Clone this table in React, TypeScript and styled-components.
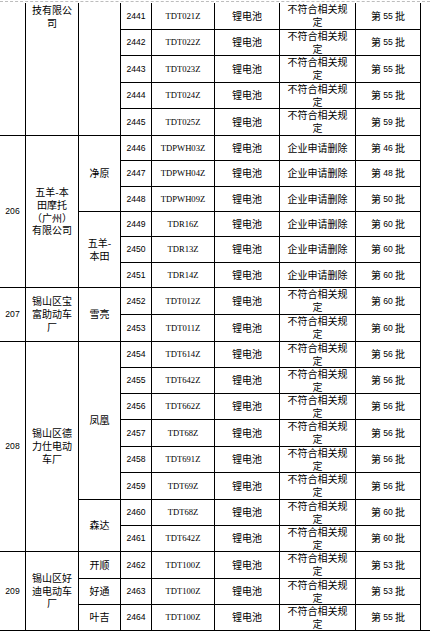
import React from 'react';
import styled, {createGlobalStyle} from 'styled-components';

const GlobalStyle = createGlobalStyle`
    html, body {
        margin: 0;
        padding: 0;
        background: #fff;
    }
    body {
        font-family: "Noto Sans CJK SC", sans-serif;
        color: #000;
    }
`;

// row heights measured line to line, first one includes the top edge
const ROWS = [27, 26, 27, 26, 27, 25, 26, 25, 25, 26, 25, 27, 27, 26, 26, 26, 27, 26, 27, 26, 26, 27, 26, 26];

const Page = styled.div`
    width: 430px;
    height: 640px;
    overflow: hidden;
    padding-top: 1px;
    box-sizing: border-box;
`;

const PageBreak = styled.div`
    border-top: 1px dashed #bdbdbd;
    height: 1px;
`;

const Sheet = styled.div`
    display: flex;
`;

const Grid = styled.div`
    display: grid;
    grid-template-columns: 26px 53px 42px 31px 63px 65px 76px 65px;
    grid-template-rows: ${ROWS.map(r => r + 'px').join(' ')};
`;

const Tail = styled.div`
    flex: 1;
    border-bottom: 1px solid #000;
`;

type Kind = 'cjk' | 'num' | 'model';

const fonts: Record<Kind, string> = {
    cjk: `font-family: "Noto Sans CJK SC", sans-serif; font-size: 10px;`,
    num: `font-family: "Liberation Sans", "Noto Sans CJK SC", sans-serif; font-size: 8.6px;`,
    model: `font-family: "Liberation Serif", "Noto Sans CJK SC", serif; font-size: 8.6px;`,
};

const Cell = styled.div<{ $col: number; $row: number; $span?: number; $kind?: Kind; $top?: boolean }>`
    grid-column: ${p => p.$col};
    grid-row: ${p => p.$row} / span ${p => p.$span || 1};
    box-sizing: border-box;
    border-right: 1px solid #000;
    border-bottom: 1px solid #000;
    display: flex;
    align-items: ${p => (p.$top ? 'flex-start' : 'center')};
    justify-content: center;
    padding-top: ${p => (p.$top ? '1px' : '0')};
    text-align: center;
    white-space: pre-line;
    line-height: 12.7px;
    ${p => fonts[p.$kind || 'cjk']}
`;

const Digits = styled.span`
    font-family: "Liberation Sans", sans-serif;
    font-size: 8.6px;
`;

type Group = { text: string; span: number; top?: boolean; kind?: Kind };

const numbers: Group[] = [
    {text: '', span: 5},
    {text: '206', span: 6, kind: 'num'},
    {text: '207', span: 2, kind: 'num'},
    {text: '208', span: 8, kind: 'num'},
    {text: '209', span: 3, kind: 'num'},
];

const companies: Group[] = [
    {text: '技有限公\n司', span: 5, top: true},
    {text: '五羊-本\n田摩托\n（广州）\n有限公司', span: 6},
    {text: '锡山区宝\n富助动车\n厂', span: 2},
    {text: '锡山区德\n力仕电动\n车厂', span: 8},
    {text: '锡山区好\n迪电动车\n厂', span: 3},
];

const brands: Group[] = [
    {text: '', span: 5},
    {text: '净原', span: 3},
    {text: '五羊-\n本田', span: 3},
    {text: '雪亮', span: 2},
    {text: '凤凰', span: 6},
    {text: '森达', span: 2},
    {text: '开顺', span: 1},
    {text: '好通', span: 1},
    {text: '叶吉', span: 1},
];

const BAD = '不符合相关规\n定';
const DEL = '企业申请删除';

const products: [string, string, number][] = [
    ['TDT021Z', BAD, 55],
    ['TDT022Z', BAD, 55],
    ['TDT023Z', BAD, 55],
    ['TDT024Z', BAD, 55],
    ['TDT025Z', BAD, 59],
    ['TDPWH03Z', DEL, 46],
    ['TDPWH04Z', DEL, 48],
    ['TDPWH09Z', DEL, 50],
    ['TDR16Z', DEL, 60],
    ['TDR13Z', DEL, 60],
    ['TDR14Z', DEL, 60],
    ['TDT012Z', BAD, 60],
    ['TDT011Z', BAD, 60],
    ['TDT614Z', BAD, 56],
    ['TDT642Z', BAD, 56],
    ['TDT662Z', BAD, 56],
    ['TDT68Z', BAD, 56],
    ['TDT691Z', BAD, 56],
    ['TDT69Z', BAD, 56],
    ['TDT68Z', BAD, 60],
    ['TDT642Z', BAD, 60],
    ['TDT100Z', BAD, 53],
    ['TDT100Z', BAD, 53],
    ['TDT100Z', BAD, 55],
];

function renderGroups(groups: Group[], col: number) {
    let row = 1;
    return groups.map((g, i) => {
        const start = row;
        row += g.span;
        return (
            <Cell key={`${col}-${i}`} $col={col} $row={start} $span={g.span} $top={g.top} $kind={g.kind}>
                {g.text}
            </Cell>
        );
    });
}

export default function App() {
    return (
        <Page>
            <GlobalStyle/>
            <PageBreak/>
            <Sheet>
                <Grid>
                    {renderGroups(numbers, 1)}
                    {renderGroups(companies, 2)}
                    {renderGroups(brands, 3)}
                    {products.map(([model, reason, batch], i) => (
                        <React.Fragment key={model + i}>
                            <Cell $col={4} $row={i + 1} $kind="num">{2441 + i}</Cell>
                            <Cell $col={5} $row={i + 1} $kind="model">{model}</Cell>
                            <Cell $col={6} $row={i + 1}>锂电池</Cell>
                            <Cell $col={7} $row={i + 1}>{reason}</Cell>
                            <Cell $col={8} $row={i + 1}>
                                第&nbsp;<Digits>{batch}</Digits>&nbsp;批
                            </Cell>
                        </React.Fragment>
                    ))}
                </Grid>
                <Tail/>
            </Sheet>
        </Page>
    );
}
